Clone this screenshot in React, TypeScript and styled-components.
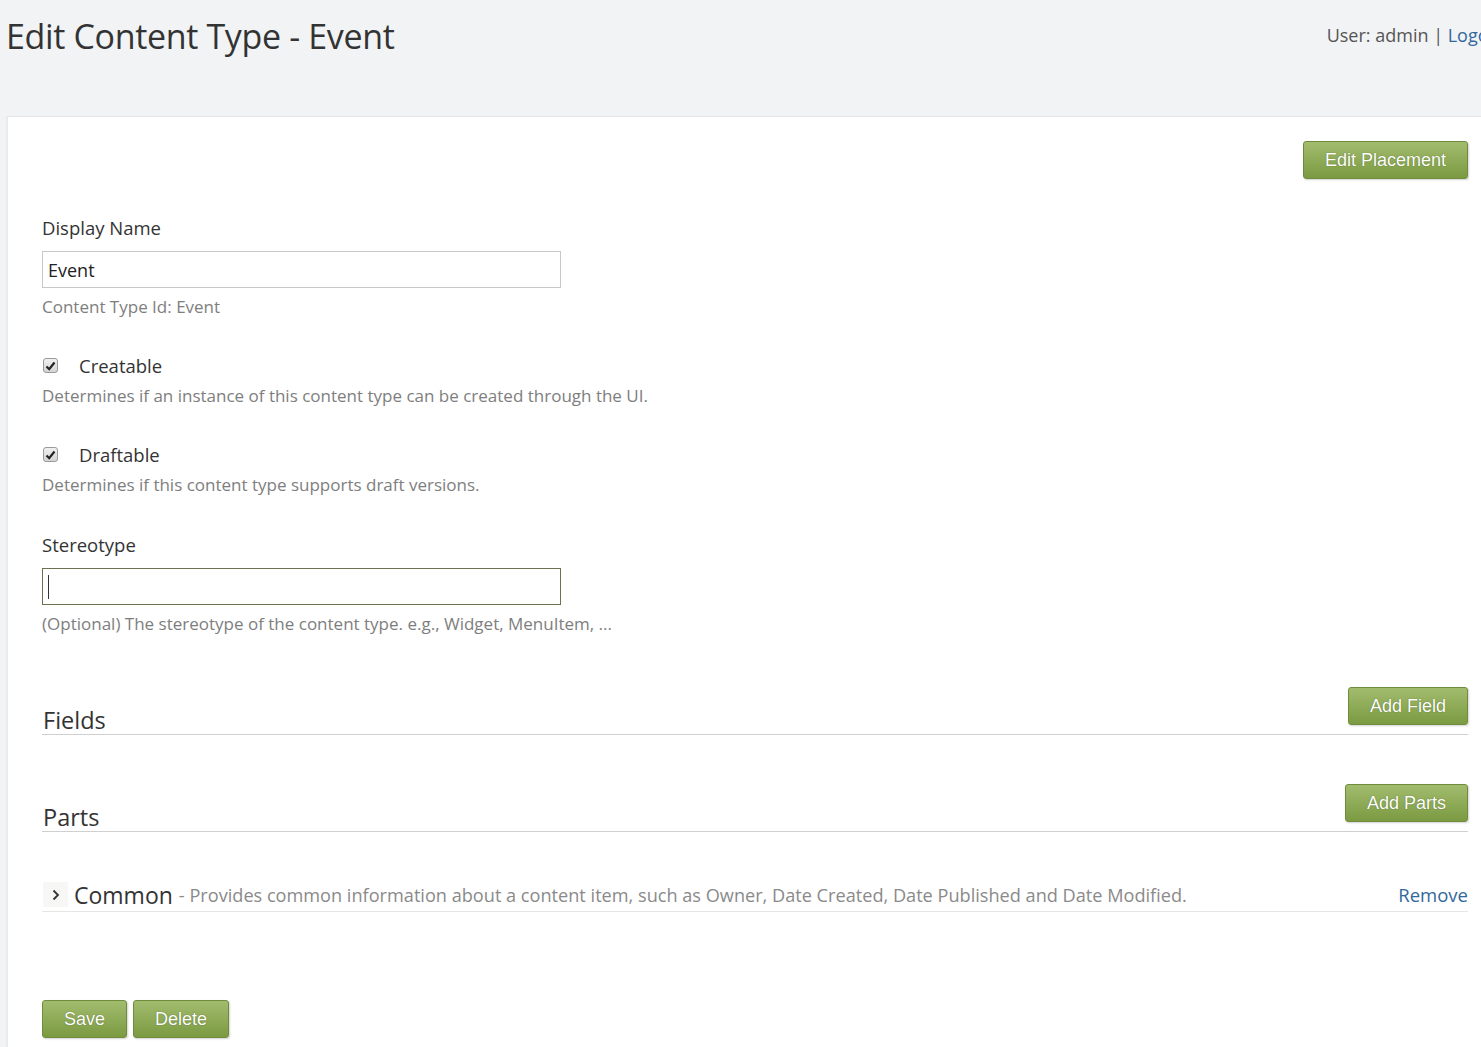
import React from 'react';
import styled, { createGlobalStyle } from 'styled-components';

const GlobalStyle = createGlobalStyle`
  html, body {
    margin: 0;
    padding: 0;
    overflow: hidden;
    background: #f2f3f5;
  }
  body {
    font-family: "Open Sans", "Noto Sans", sans-serif;
    color: #333;
  }
`;

const Page = styled.div`
  width: 1536px;
`;

const Header = styled.header`
  height: 116px;
  display: flex;
  justify-content: space-between;
  align-items: flex-start;
`;

const Title = styled.h1`
  margin: 12px 0 0 6px;
  font-size: 34px;
  font-weight: 400;
  letter-spacing: -0.35px;
  line-height: 48px;
  color: #333;
`;

const UserBox = styled.div`
  margin: 21px 30px 0 0;
  font-size: 18px;
  line-height: 28px;
  color: #555;
`;

const Link = styled.a<{ $size?: number }>`
  color: #32689b;
  text-decoration: none;
  font-size: ${(p) => (p.$size ? `${p.$size}px` : 'inherit')};
`;

const Panel = styled.main`
  margin-left: 6px;
  background: #fff;
  border-top: 1px solid #e4e4e4;
  border-left: 2px solid #ebebeb;
  padding: 24px 68px 40px 34px;
  min-height: 960px;
`;

const Actions = styled.div`
  display: flex;
  justify-content: flex-end;
`;

const GreenButton = styled.button`
  height: 38px;
  padding: 0 21px;
  font-family: "Liberation Sans", Arial, sans-serif;
  font-size: 18px;
  color: #fff;
  text-shadow: 0 0 1px rgba(40, 60, 10, 0.7);
  background: linear-gradient(#a2bc6e, #7b9a41);
  border: 1px solid #6e8c3b;
  border-radius: 3px;
  box-shadow: 1px 1px 2px rgba(0, 0, 0, 0.18);
  cursor: pointer;
`;

const Group = styled.div<{ $top: number }>`
  margin-top: ${(p) => p.$top}px;
`;

const Label = styled.div`
  font-size: 18.5px;
  line-height: 27px;
  color: #333;
`;

const TextBox = styled.div<{ $focus?: boolean }>`
  box-sizing: border-box;
  width: 519px;
  height: 37px;
  margin-top: 10px;
  padding: 0 5px;
  display: flex;
  align-items: center;
  font-size: 18px;
  color: #222;
  border: 1px solid ${(p) => (p.$focus ? '#6f6f52' : '#c8c8c8')};
  background: #fff;
`;

const Caret = styled.span`
  width: 1px;
  height: 24px;
  background: #333;
`;

const Hint = styled.div<{ $top?: number }>`
  margin-top: ${(p) => p.$top ?? 0}px;
  font-size: 17px;
  line-height: 24px;
  color: #7e7e7e;
`;

const CheckRow = styled.div`
  display: flex;
  align-items: center;
  gap: 21px;
  padding-left: 1px;
`;

const Box = styled.span`
  box-sizing: border-box;
  width: 15px;
  height: 15px;
  border: 1px solid #9a9a9a;
  border-radius: 3px;
  background: linear-gradient(#f0f0f0, #d4d4d4);
  display: flex;
  align-items: center;
  justify-content: center;
`;

const SectionHead = styled.div<{ $top: number }>`
  margin-top: ${(p) => p.$top}px;
  display: flex;
  justify-content: space-between;
  align-items: flex-end;
  border-bottom: 1px solid #d0d0d0;
`;

const SectionTitle = styled.h2`
  margin: 0 0 0 1px;
  font-size: 23.5px;
  font-weight: 400;
  line-height: 28px;
  color: #333;
`;

const SectionButton = styled(GreenButton)`
  margin-bottom: 9px;
`;

const PartRow = styled.div`
  margin-top: 46px;
  display: flex;
  align-items: center;
  height: 33px;
  border-bottom: 1px solid #e6e6e6;
`;

const Chevron = styled.span`
  box-sizing: border-box;
  width: 25px;
  height: 25px;
  margin: 0 6px 0 1px;
  display: flex;
  align-items: center;
  justify-content: center;
  background: #f7f7f5;
`;

const PartName = styled.span`
  font-size: 23px;
  color: #333;
  margin-right: 6px;
`;

const PartDesc = styled.span`
  flex: 1;
  font-size: 18.15px;
  color: #8a8a8a;
`;

const Footer = styled.div`
  margin-top: 88px;
  display: flex;
  gap: 6px;
`;

const CheckMark = () => (
  <svg width="11" height="10" viewBox="0 0 11 10">
    <path d="M1.5 5.5 L4.2 8.2 L9.5 1.5" fill="none" stroke="#222" strokeWidth="2.2" />
  </svg>
);

const CheckField = ({ label, hint, top }: { label: string; hint: string; top: number }) => (
  <Group $top={top}>
    <CheckRow>
      <Box>
        <CheckMark />
      </Box>
      <Label>{label}</Label>
    </CheckRow>
    <Hint $top={5}>{hint}</Hint>
  </Group>
);

const App = () => (
  <Page>
    <GlobalStyle />
    <Header>
      <Title>Edit Content Type - Event</Title>
      <UserBox>
        User: admin | <Link href="#">Logout</Link>
      </UserBox>
    </Header>
    <Panel>
      <Actions>
        <GreenButton>Edit Placement</GreenButton>
      </Actions>

      <Group $top={35}>
        <Label>Display Name</Label>
        <TextBox>Event</TextBox>
        <Hint $top={7}>Content Type Id: Event</Hint>
      </Group>

      <CheckField
        top={33}
        label="Creatable"
        hint="Determines if an instance of this content type can be created through the UI."
      />
      <CheckField top={33} label="Draftable" hint="Determines if this content type supports draft versions." />

      <Group $top={34}>
        <Label>Stereotype</Label>
        <TextBox $focus>
          <Caret />
        </TextBox>
        <Hint $top={7}>(Optional) The stereotype of the content type. e.g., Widget, MenuItem, ...</Hint>
      </Group>

      <SectionHead $top={51}>
        <SectionTitle>Fields</SectionTitle>
        <SectionButton>Add Field</SectionButton>
      </SectionHead>

      <SectionHead $top={49}>
        <SectionTitle>Parts</SectionTitle>
        <SectionButton>Add Parts</SectionButton>
      </SectionHead>

      <PartRow>
        <Chevron>
          <svg width="8" height="12" viewBox="0 0 8 12">
            <path d="M1.5 1.5 L6 6 L1.5 10.5" fill="none" stroke="#333" strokeWidth="1.8" />
          </svg>
        </Chevron>
        <PartName>Common</PartName>
        <PartDesc>
          - Provides common information about a content item, such as Owner, Date Created, Date Published and Date
          Modified.
        </PartDesc>
        <Link href="#" $size={18.5}>
          Remove
        </Link>
      </PartRow>

      <Footer>
        <GreenButton>Save</GreenButton>
        <GreenButton>Delete</GreenButton>
      </Footer>
    </Panel>
  </Page>
);

export default App;
